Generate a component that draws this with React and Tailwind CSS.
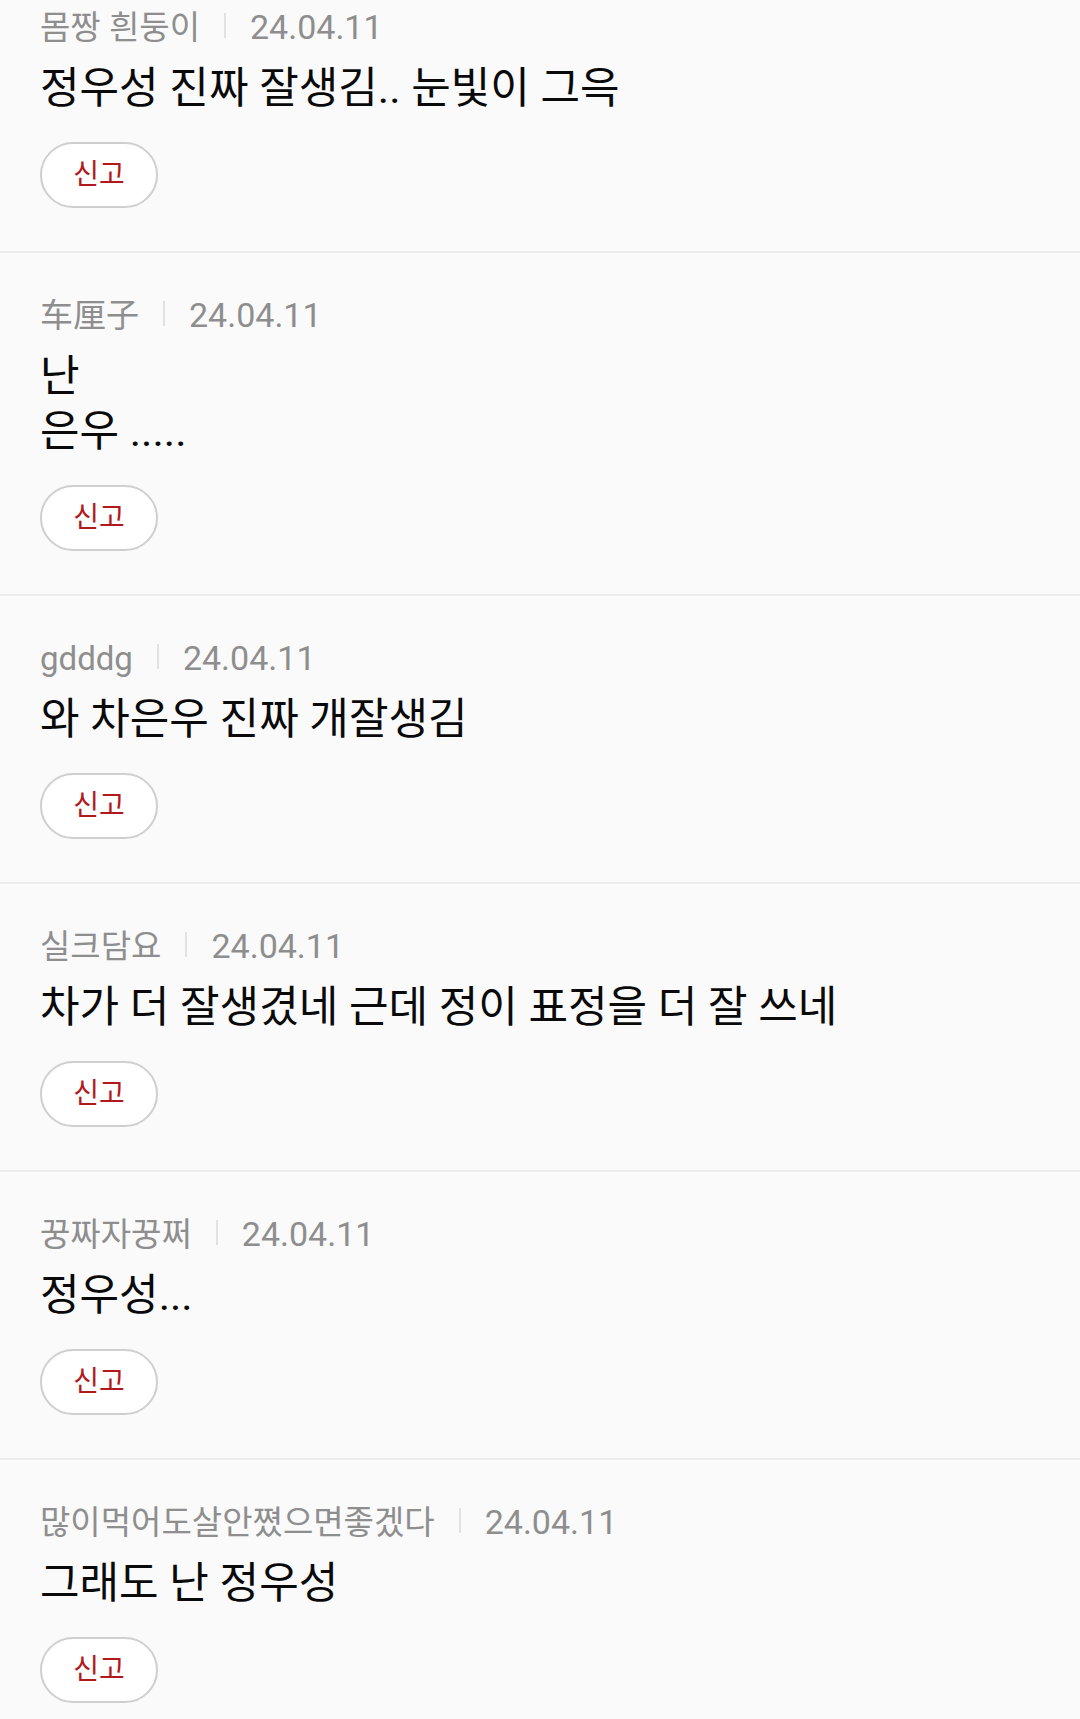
const comments = [
  { name: '몸짱 흰둥이', date: '24.04.11', text: '정우성 진짜 잘생김.. 눈빛이 그윽' },
  { name: '车厘子', date: '24.04.11', text: '난\n은우 .....' },
  { name: 'gdddg', date: '24.04.11', text: '와 차은우 진짜 개잘생김' },
  { name: '실크담요', date: '24.04.11', text: '차가 더 잘생겼네 근데 정이 표정을 더 잘 쓰네' },
  { name: '꿍짜자꿍쩌', date: '24.04.11', text: '정우성...' },
  { name: '많이먹어도살안쪘으면좋겠다', date: '24.04.11', text: '그래도 난 정우성' },
];

function Comment({ item, first }) {
  return (
    <div className={`px-[40px] pb-[43px] border-b-2 border-[#ececec] ${first ? 'pt-[7px]' : 'pt-[42px]'}`}>
      {/* author + date */}
      <div className="flex items-baseline h-[40px] text-[#8e8e8e]">
        <span className="text-[33px] leading-[40px]">{item.name}</span>
        <span className="self-center w-[2px] h-[25px] bg-[#e2e2e2] ml-[24px] mr-[24px] mb-[3px]" />
        <span className="text-[34px] leading-[40px]">{item.date}</span>
      </div>
      <p className="mt-[14px] text-[43px] leading-[55px] text-[#0a0a0a] whitespace-pre-line">{item.text}</p>
      <button className="mt-[26px] flex items-center justify-center w-[118px] h-[66px] rounded-full border-2 border-[#cfcfcf] bg-white text-[28px] text-[#b3191c]">
        신고
      </button>
    </div>
  );
}

export default function App() {
  return (
    <div className="h-[1719px] overflow-hidden bg-[#fafafa] font-[family-name:Roboto,'Noto_Sans_CJK_KR',sans-serif]">
      {comments.map((c, i) => (
        <Comment key={i} item={c} first={i === 0} />
      ))}
    </div>
  );
}
